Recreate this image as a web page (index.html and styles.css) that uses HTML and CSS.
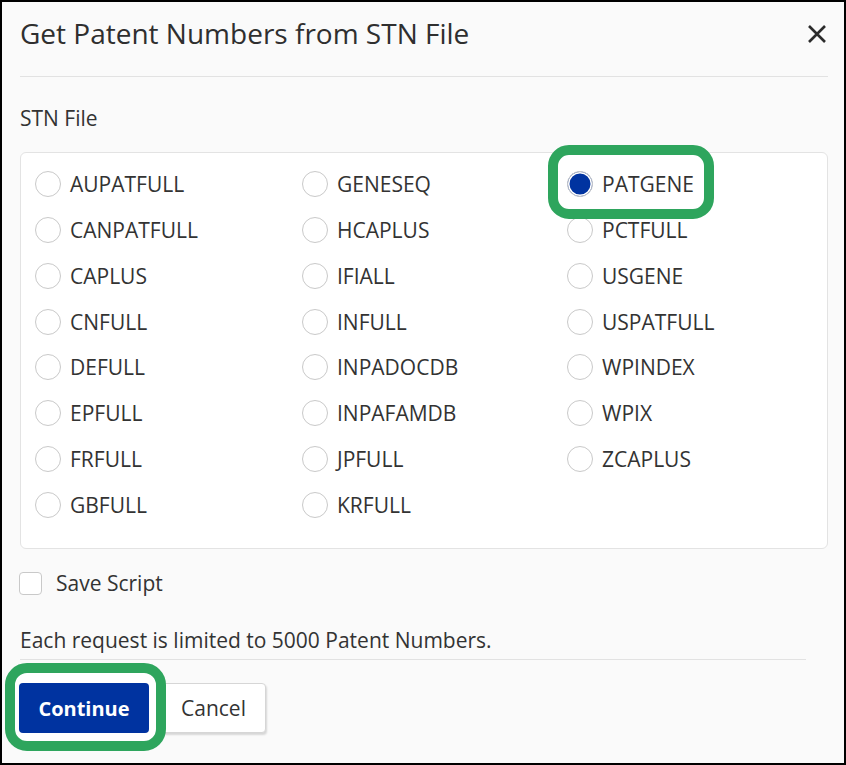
FILE: index.html
```html
<!DOCTYPE html>
<html>
<head>
<meta charset="utf-8">
<link rel="stylesheet" href="styles.css">
</head>
<body>
<div class="dialog">
  <div class="header">
    <h1 class="title">Get Patent Numbers from STN File</h1>
    <svg class="close" width="20" height="20" viewBox="0 0 20 20"><path d="M2 2 L18 18 M18 2 L2 18" stroke="#2b2b2b" stroke-width="2.6" stroke-linecap="butt" fill="none"/></svg>
  </div>
  <div class="label">STN File</div>
  <div class="panel">
    <div class="opt"><span class="radio"></span><span>AUPATFULL</span></div>
    <div class="opt"><span class="radio"></span><span>CANPATFULL</span></div>
    <div class="opt"><span class="radio"></span><span>CAPLUS</span></div>
    <div class="opt"><span class="radio"></span><span>CNFULL</span></div>
    <div class="opt"><span class="radio"></span><span>DEFULL</span></div>
    <div class="opt"><span class="radio"></span><span>EPFULL</span></div>
    <div class="opt"><span class="radio"></span><span>FRFULL</span></div>
    <div class="opt"><span class="radio"></span><span>GBFULL</span></div>
    <div class="opt"><span class="radio"></span><span>GENESEQ</span></div>
    <div class="opt"><span class="radio"></span><span>HCAPLUS</span></div>
    <div class="opt"><span class="radio"></span><span>IFIALL</span></div>
    <div class="opt"><span class="radio"></span><span>INFULL</span></div>
    <div class="opt"><span class="radio"></span><span>INPADOCDB</span></div>
    <div class="opt"><span class="radio"></span><span>INPAFAMDB</span></div>
    <div class="opt"><span class="radio"></span><span>JPFULL</span></div>
    <div class="opt"><span class="radio"></span><span>KRFULL</span></div>
    <div class="opt hl"><span class="radio checked"></span><span>PATGENE</span></div>
    <div class="opt"><span class="radio"></span><span>PCTFULL</span></div>
    <div class="opt"><span class="radio"></span><span>USGENE</span></div>
    <div class="opt"><span class="radio"></span><span>USPATFULL</span></div>
    <div class="opt"><span class="radio"></span><span>WPINDEX</span></div>
    <div class="opt"><span class="radio"></span><span>WPIX</span></div>
    <div class="opt"><span class="radio"></span><span>ZCAPLUS</span></div>
  </div>
  <div class="save"><span class="checkbox"></span><span>Save Script</span></div>
  <div class="note">Each request is limited to 5000 Patent Numbers.</div>
  <div class="rule"></div>
  <div class="actions">
    <div class="hl-btn"><button class="btn primary">Continue</button></div>
    <button class="btn secondary">Cancel</button>
  </div>
</div>
</body>
</html>
```

FILE: styles.css
```css
*, *::before, *::after { box-sizing: border-box; }
html, body { margin: 0; padding: 0; }
body {
  width: 846px;
  height: 765px;
  border: 2px solid #000;
  background: #fafafa;
  font-family: "Open Sans", "Noto Sans", sans-serif;
  color: #333;
  overflow: hidden;
}
.dialog {
  padding: 0 16px 0 18px;
}
.header {
  display: flex;
  justify-content: space-between;
  align-items: flex-start;
  height: 75px;
  padding-top: 13px;
  border-bottom: 1px solid #e2e2e2;
}
.title {
  margin: 0;
  font-size: 28px;
  line-height: 36px;
  font-weight: 500;
  color: #2f2f2f;
}
.close {
  margin-top: 9px;
  margin-right: 1px;
}
.label {
  margin-top: 27px;
  font-size: 21px;
  line-height: 28px;
}
.panel {
  margin-top: 20px;
  height: 397px;
  border: 1px solid #e3e3e3;
  border-radius: 6px;
  background: #fff;
  padding: 8px 0 20px 14px;
  display: grid;
  grid-auto-flow: column;
  grid-template-rows: repeat(8, 45.86px);
  grid-template-columns: 267px 265px 1fr;
}
.opt {
  display: flex;
  align-items: center;
  gap: 9px;
  font-size: 21px;
  line-height: 28px;
}
.radio {
  width: 26px;
  height: 26px;
  border-radius: 50%;
  border: 1px solid #c9c9c9;
  background: #fff;
  flex: none;
}
.radio.checked {
  background: #0033a0;
  box-shadow: inset 0 0 0 1.5px #fff;
}
.hl { position: relative; }
.hl::after {
  content: "";
  position: absolute;
  left: -19px;
  top: -16px;
  width: 166px;
  height: 74px;
  border: 10px solid #2ea55d;
  border-radius: 21px;
}
.save {
  margin-top: 22px;
  display: flex;
  align-items: center;
  gap: 14px;
  font-size: 21px;
  line-height: 24px;
  margin-left: -1px;
}
.checkbox {
  width: 23px;
  height: 23px;
  border: 1px solid #c9c9c9;
  border-radius: 4px;
  background: #fff;
  flex: none;
}
.note {
  margin-top: 31px;
  font-size: 21px;
  line-height: 28px;
}
.rule {
  margin-top: 5px;
  margin-right: 22px;
  border-top: 1px solid #e2e2e2;
}
.actions {
  margin-top: 23px;
  display: flex;
  gap: 12px;
  margin-left: -1px;
}
.hl-btn { position: relative; }
.hl-btn::before {
  content: "";
  position: absolute;
  left: -14px;
  top: -20px;
  width: 161px;
  height: 88px;
  border: 10px solid #2ea55d;
  border-radius: 22px;
  background: #fff;
  z-index: 0;
}
.btn {
  font-family: "Open Sans", "Noto Sans", sans-serif;
  font-size: 21px;
  height: 50px;
  border-radius: 4px;
  cursor: pointer;
}
.primary {
  position: relative;
  z-index: 1;
  width: 130px;
  background: #0033a0;
  color: #fff;
  border: none;
  font-weight: 700;
  font-size: 20px;
}
.secondary {
  width: 105px;
  background: #fff;
  color: #333;
  border: 1px solid #d6d6d6;
  box-shadow: 1px 2px 2px rgba(0,0,0,0.14);
}
```
